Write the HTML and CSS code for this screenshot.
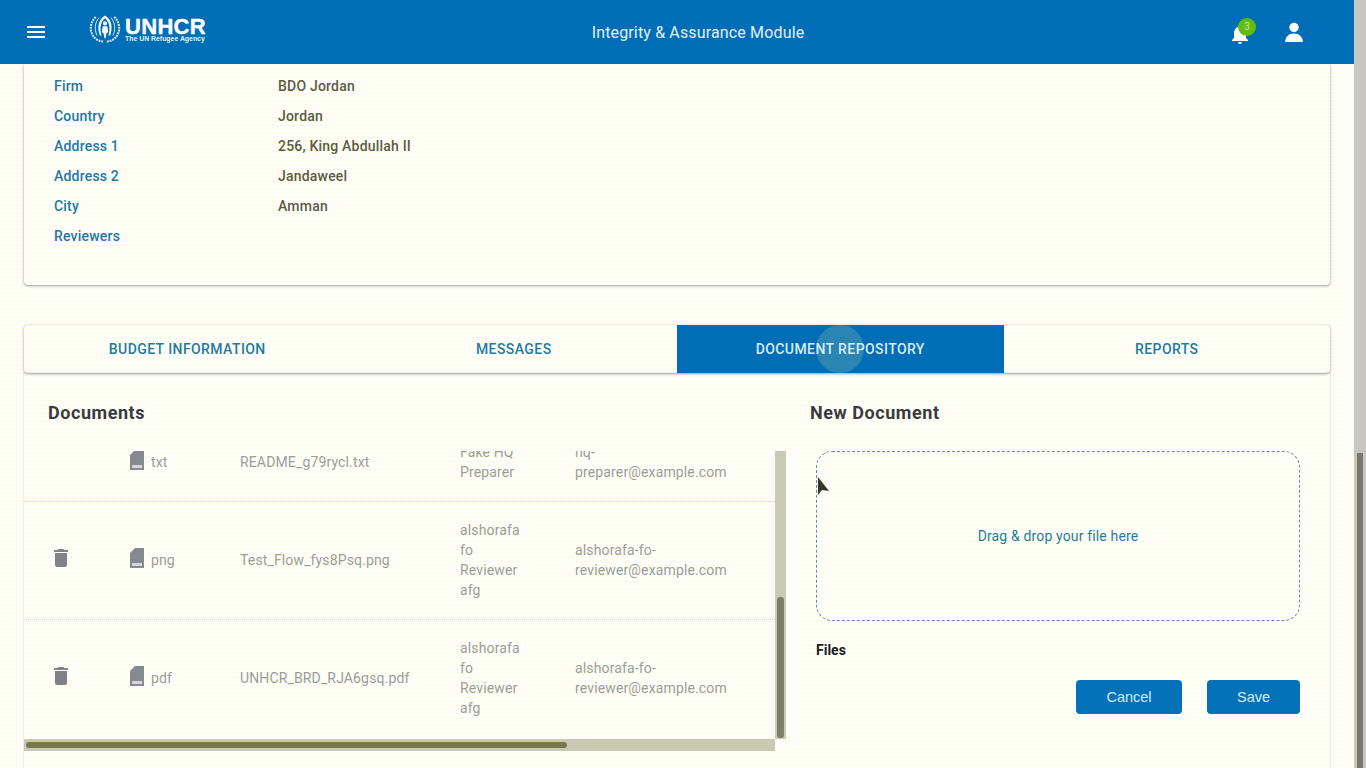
FILE: index.html
```html
<!DOCTYPE html>
<html lang="en">
<head>
<meta charset="utf-8">
<title>Integrity &amp; Assurance Module</title>
<link rel="stylesheet" href="styles.css">
</head>
<body>
<div class="app">
  <header class="topbar">
    <div class="top-left">
      <svg class="icon-menu" viewBox="0 0 24 24"><path d="M3 18h18v-2H3v2zm0-5h18v-2H3v2zm0-7v2h18V6H3z"/></svg>
      <div class="logo">
        <svg class="emblem" viewBox="0 0 34 30">
          <g class="laurel">
            <path d="M7 2C2 7 .5 14 3 20c2 5 6.500 8 12 8.500"/>
            <path d="M27 2c5 5 6.500 12 4 18-2 5-6.500 8-12 8.500"/>
          </g>
          <g class="laurel-inner">
            <path d="M8.500 22C5.500 16 6 8 10.500 3"/>
            <path d="M25.500 22c3-6 2.500-14-2-19"/>
          </g>
          <path class="arch" d="M11.500 22C8.500 14 9.500 5 17 .5 24.500 5 25.500 14 22.500 22h-1.800C23 14 21.800 7.500 17 3.500 12.200 7.500 11 14 13.300 22z"/>
          <circle class="arch" cx="17" cy="9" r="2.200"/>
          <path class="arch" d="M14.500 12h5l.9 6.500-1.900 1-.8 5.500h-1.400l-.8-5.500-1.900-1z"/>
        </svg>
        <div class="wordmark">
          <span class="word-main">UNHCR</span>
          <span class="word-sub">The UN Refugee Agency</span>
        </div>
      </div>
    </div>
    <div class="top-title">Integrity &amp; Assurance Module</div>
    <div class="top-right">
      <div class="bell">
        <svg class="icon-white" viewBox="0 0 24 24"><path d="M12 22c1.100 0 2-.9 2-2h-4c0 1.100.89 2 2 2zm6-6v-5c0-3.070-1.640-5.640-4.500-6.320V4c0-.83-.67-1.500-1.500-1.500s-1.500.67-1.500 1.500v.68C7.630 5.360 6 7.920 6 11v5l-2 2v1h16v-1l-2-2z"/></svg>
        <span class="badge">3</span>
      </div>
      <svg class="icon-white icon-person" viewBox="0 0 24 24"><circle cx="12" cy="7.500" r="4.700"/><path d="M3.200 22c0-5.500 3.800-8.500 8.800-8.500s8.800 3 8.800 8.500z"/></svg>
    </div>
  </header>

  <main class="content">
    <section class="card details">
      <div class="detail-row"><span class="detail-label">Firm</span><span class="detail-value">BDO Jordan</span></div>
      <div class="detail-row"><span class="detail-label">Country</span><span class="detail-value">Jordan</span></div>
      <div class="detail-row"><span class="detail-label">Address 1</span><span class="detail-value">256, King Abdullah II</span></div>
      <div class="detail-row"><span class="detail-label">Address 2</span><span class="detail-value">Jandaweel</span></div>
      <div class="detail-row"><span class="detail-label">City</span><span class="detail-value">Amman</span></div>
      <div class="detail-row"><span class="detail-label">Reviewers</span><span class="detail-value"></span></div>
    </section>

    <nav class="card tabs">
      <div class="tab">BUDGET INFORMATION</div>
      <div class="tab">MESSAGES</div>
      <div class="tab tab-active"><span class="ripple"></span><span class="tab-text">DOCUMENT REPOSITORY</span></div>
      <div class="tab">REPORTS</div>
    </nav>

    <section class="panel">
      <div class="col-docs">
        <h2 class="heading heading-docs">Documents</h2>
        <div class="scroller">
          <div class="table">
            <div class="row row-short">
              <span class="cell-trash"></span>
              <span class="cell-type">
                <svg class="icon-file" viewBox="0 0 14 20"><path d="M5 0h9v20H0V5z"/><rect class="file-label" x="2" y="15" width="10" height="3"/></svg>txt
              </span>
              <span>README_g79rycl.txt</span>
              <span>Fake HQ Preparer</span>
              <span>hq-preparer@example.com</span>
            </div>
            <div class="row">
              <span class="cell-trash"><svg class="icon-trash" viewBox="0 0 24 24"><path d="M6 19c0 1.100.9 2 2 2h8c1.100 0 2-.9 2-2V7H6v12zM19 4h-3.500l-1-1h-5l-1 1H5v2h14V4z"/></svg></span>
              <span class="cell-type">
                <svg class="icon-file" viewBox="0 0 14 20"><path d="M5 0h9v20H0V5z"/><rect class="file-label" x="2" y="15" width="10" height="3"/></svg>png
              </span>
              <span>Test_Flow_fys8Psq.png</span>
              <span>alshorafa fo Reviewer afg</span>
              <span>alshorafa-fo-reviewer@example.com</span>
            </div>
            <div class="row">
              <span class="cell-trash"><svg class="icon-trash" viewBox="0 0 24 24"><path d="M6 19c0 1.100.9 2 2 2h8c1.100 0 2-.9 2-2V7H6v12zM19 4h-3.500l-1-1h-5l-1 1H5v2h14V4z"/></svg></span>
              <span class="cell-type">
                <svg class="icon-file" viewBox="0 0 14 20"><path d="M5 0h9v20H0V5z"/><rect class="file-label" x="2" y="15" width="10" height="3"/></svg>pdf
              </span>
              <span>UNHCR_BRD_RJA6gsq.pdf</span>
              <span>alshorafa fo Reviewer afg</span>
              <span>alshorafa-fo-reviewer@example.com</span>
            </div>
          </div>
          <div class="vbar"><div class="vthumb"></div></div>
          <div class="hbar"><div class="hthumb"></div></div>
          <div class="corner"></div>
        </div>
      </div>
      <div class="col-new">
        <h2 class="heading">New Document</h2>
        <div class="form">
          <div class="dropzone">
            Drag &amp; drop your file here
            <svg class="cursor" viewBox="0 0 14 22"><path d="M1 1v18l4-5 7 1z"/></svg>
          </div>
          <div class="files-label">Files</div>
          <div class="actions">
            <button class="btn btn-cancel">Cancel</button>
            <button class="btn btn-save">Save</button>
          </div>
        </div>
      </div>
    </section>
  </main>
</div>
<aside class="page-bar"><div class="page-thumb"></div></aside>
</body>
</html>
```

FILE: styles.css
```css
* { box-sizing: border-box; }

html, body { height: 100%; }

body {
  margin: 0;
  display: flex;
  height: 768px;
  overflow: hidden;
  font-family: Roboto, "Liberation Sans", sans-serif;
  font-size: 14px;
  background-color: #fefefe;
  background-image: radial-gradient(circle at 1.5px 1.5px, #fff59a .5px, transparent .6px);
  background-size: 4px 4px;
}

.app {
  flex: 1;
  min-width: 0;
  display: flex;
  flex-direction: column;
}

/* top bar */
.topbar {
  flex: none;
  height: 64px;
  display: grid;
  grid-template-columns: 215px 1fr 173px;
  align-items: center;
  background-color: #006eb6;
  background-image: radial-gradient(circle at 1px 1px, #0b7cb4 .5px, transparent .6px);
  background-size: 2px 2px;
  color: #fff;
}

.top-left {
  display: flex;
  align-items: center;
  padding-left: 24px;
  gap: 41px;
}

.icon-menu { width: 24px; height: 24px; fill: #fff; flex: none; }

.logo { display: flex; align-items: center; gap: 4px; flex: none; margin-top: -4px; }

.emblem { width: 32px; height: 28px; flex: none; margin-top: -2px; }
.laurel path { fill: none; stroke: #e8f2f8; stroke-width: 2.200; stroke-dasharray: 2 1; }
.laurel-inner path { fill: none; stroke: #e8f2f8; stroke-width: 1; }
.arch { fill: #f6fafc; }

.wordmark { display: flex; flex-direction: column; width: 80px; }
.word-main {
  font-family: "Liberation Sans", sans-serif;
  font-weight: 700;
  font-size: 22px;
  line-height: 17px;
  letter-spacing: .3px;
  -webkit-text-stroke: .4px #fff;
}
.word-sub {
  font-family: "Liberation Sans", sans-serif;
  font-weight: 700;
  font-size: 6.900px;
  line-height: 8px;
  white-space: nowrap;
  color: #e8f2f8;
}

.top-title {
  text-align: center;
  font-size: 16px;
  letter-spacing: .15px;
  color: #e4eff6;
}

.top-right {
  display: flex;
  align-items: center;
  justify-content: flex-end;
  gap: 30px;
  padding-right: 48px;
}

.bell { position: relative; width: 24px; height: 24px; margin-top: 4px; }
.icon-white { width: 24px; height: 24px; fill: #fff; display: block; }

.badge {
  position: absolute;
  left: 10px;
  top: -4px;
  width: 18px;
  height: 18px;
  border-radius: 50%;
  background: #63bd0f;
  color: #c9e8a8;
  font-size: 10px;
  line-height: 18px;
  text-align: center;
}

/* content */
.content {
  flex: 1;
  min-height: 0;
  overflow: hidden;
  padding: 0 24px;
}

.card {
  border-radius: 4px;
  box-shadow: 0 1px 3px rgba(90, 90, 70, .55), 0 0 1px rgba(150, 150, 170, .5);
}

.details {
  height: 221px;
  padding: 7px 30px 0;
  border-radius: 0 0 4px 4px;
  margin-bottom: 40px;
}

.detail-row {
  display: grid;
  grid-template-columns: 224px 1fr;
  height: 30px;
  align-items: center;
  font-weight: 500;
  letter-spacing: .2px;
}

.detail-label { color: #2278a0; }
.detail-value { color: #5c5c40; }

.tabs {
  display: grid;
  grid-template-columns: repeat(4, 1fr);
  height: 48px;
  overflow: hidden;
}

.tab {
  position: relative;
  display: flex;
  align-items: center;
  justify-content: center;
  color: #1f7aa0;
  font-weight: 500;
  letter-spacing: .42px;
}

.tab-active {
  background-color: #006eb6;
  background-image: radial-gradient(circle at 1px 1px, #0b7cb4 .5px, transparent .6px);
  background-size: 2px 2px;
  color: #d8ecf6;
}

.tab-text { position: relative; }

.ripple {
  position: absolute;
  left: 50%;
  top: 50%;
  width: 48px;
  height: 48px;
  margin: -24px 0 0 -24px;
  border-radius: 50%;
  background: rgba(150, 195, 170, .28);
}

.panel {
  display: flex;
  height: 395px;
  box-shadow: 0 0 1px rgba(130, 130, 150, .8);
}

.heading {
  margin: 0;
  padding-top: 28px;
  height: 78px;
  font-size: 18px;
  line-height: 24px;
  font-weight: 700;
  letter-spacing: .55px;
  color: #3b3b3d;
}

.heading-docs { padding-left: 24px; }

.col-docs { width: 762px; flex: none; }

.scroller {
  display: grid;
  grid-template-columns: 751px 11px;
  grid-template-rows: 288px 12px;
}

.table {
  display: flex;
  flex-direction: column;
  justify-content: flex-end;
  overflow: hidden;
  padding-bottom: 2px;
  color: #9b9e96;
  line-height: 20px;
  letter-spacing: .14px;
}

.row {
  flex: none;
  display: grid;
  grid-template-columns: 106px 110px 220px 115px 160px;
  align-items: center;
  height: 118px;
  padding-bottom: 2px;
  border-top: 1px dotted #d9d9c8;
}

.row-short { height: 78px; border-top: 0; padding-bottom: 0; }

.row > span:nth-child(4) { width: 66px; }

.cell-trash { padding-left: 25px; display: flex; }
.icon-trash { width: 24px; height: 24px; fill: #808286; margin-top: -4px; }

.cell-type { display: flex; align-items: center; gap: 7px; }
.icon-file { width: 14px; height: 20px; fill: #868a8e; margin-top: -4px; flex: none; }
.file-label { fill: #d4d6d8; }

.vbar {
  background: #c9c9b4;
  display: flex;
  flex-direction: column;
  justify-content: flex-end;
  align-items: center;
  padding-bottom: 1px;
}

.vthumb { width: 7px; height: 141px; border-radius: 3px; background: #7d7f68; }

.hbar {
  background: #c9c9b4;
  padding: 3px 2px;
}

.hthumb { width: 541px; height: 6px; border-radius: 3px; background: #77774c; }

.col-new { flex: 1; min-width: 0; padding: 0 30px 0 24px; }

.form { padding-left: 6px; }

.dropzone {
  position: relative;
  display: flex;
  align-items: center;
  justify-content: center;
  height: 170px;
  border: 1px dashed #6f86ac;
  border-radius: 16px;
  color: #1f7f90;
  letter-spacing: .15px;
}

.cursor {
  position: absolute;
  left: 0;
  top: 24px;
  width: 14px;
  height: 22px;
  fill: #36362c;
}

.files-label {
  margin-top: 19px;
  line-height: 20px;
  font-weight: 700;
  color: #1c1c1c;
}

.actions {
  display: flex;
  justify-content: flex-end;
  gap: 25px;
  margin-top: 20px;
}

.btn {
  height: 34px;
  border: 0;
  border-radius: 4px;
  background: #0472b8;
  color: #d4ecf6;
  font-family: "Liberation Sans", sans-serif;
  font-size: 14.500px;
  padding: 0;
}

.btn-cancel { width: 106px; }
.btn-save { width: 93px; }

/* page scrollbar */
.page-bar {
  flex: none;
  width: 12px;
  background: #c7c7c0;
  display: flex;
  flex-direction: column;
  justify-content: flex-end;
  align-items: center;
}

.page-thumb { width: 6px; height: 315px; background: #77776e; }
```
